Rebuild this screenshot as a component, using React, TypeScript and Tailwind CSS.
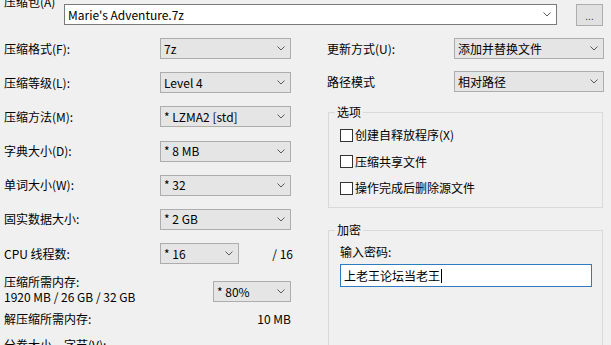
import React from "react";

function Chevron({ className = "" }: { className?: string }) {
  return (
    <svg width="8" height="5" viewBox="0 0 8 5" className={className}>
      <path d="M0.5 0.5 L4 4 L7.5 0.5" fill="none" stroke="#5a5a5a" strokeWidth="1" />
    </svg>
  );
}

function Combo({ value, className = "" }: { value: string; className?: string }) {
  return (
    <div
      className={`flex items-center justify-between h-[21px] bg-[#e5e5e5] border border-[#adadad] pl-[3px] pr-[5px] ${className}`}
    >
      <span className="whitespace-nowrap leading-[14px]">{value}</span>
      <Chevron />
    </div>
  );
}

function Row({ label, children }: { label: string; children: React.ReactNode }) {
  return (
    <div className="flex items-center h-[21px]">
      <span className="w-[156px] whitespace-nowrap leading-[14px]">{label}</span>
      {children}
    </div>
  );
}

function Check({ label }: { label: string }) {
  return (
    <div className="flex items-center h-[14px]">
      <span className="w-[13px] h-[13px] bg-white border border-[#333333]" />
      <span className="ml-[2px] leading-[14px] whitespace-nowrap">{label}</span>
    </div>
  );
}

export default function App() {
  return (
    <div className="w-[611px] h-[345px] overflow-hidden bg-[#f0f0f0] text-[12px] text-black font-['Noto_Sans_CJK_SC','Noto_Sans_CJK_JP',sans-serif] leading-none">
      {/* top row */}
      <div className="flex items-start pt-[4px] pl-[4px]">
        <span className="w-[60px] -mt-[10px] leading-[15px] whitespace-nowrap">压缩包(A)</span>
        <div className="flex items-center justify-between w-[493px] h-[21px] bg-white border border-[#7a7a7a] pl-[3px] pr-[5px]">
          <span className="leading-[14px] whitespace-nowrap">Marie's Adventure.7z</span>
          <Chevron />
        </div>
        <div className="ml-[19px] w-[27px] h-[22px] bg-[#e1e1e1] border border-[#adadad] flex items-end justify-center pb-[4px] text-[10px] text-[#444] leading-none">
          ...
        </div>
      </div>

      <div className="flex mt-[12px]">
        {/* left column */}
        <div className="w-[291px] pl-[4px] flex flex-col">
          <div className="flex flex-col gap-[13.2px]">
            <Row label="压缩格式(F):">
              <Combo value="7z" className="w-[131px]" />
            </Row>
            <Row label="压缩等级(L):">
              <Combo value="Level 4" className="w-[131px]" />
            </Row>
            <Row label="压缩方法(M):">
              <Combo value="* LZMA2 [std]" className="w-[131px]" />
            </Row>
            <Row label="字典大小(D):">
              <Combo value="* 8 MB" className="w-[131px]" />
            </Row>
            <Row label="单词大小(W):">
              <Combo value="* 32" className="w-[131px]" />
            </Row>
            <Row label="固实数据大小:">
              <Combo value="* 2 GB" className="w-[131px]" />
            </Row>
            <Row label="CPU 线程数:">
              <Combo value="* 16" className="w-[79px]" />
              <span className="flex-1 text-right leading-[14px] -mr-[2px]">/ 16</span>
            </Row>
          </div>
          <div className="flex justify-between mt-[10px]">
            <div className="flex flex-col leading-[15px] whitespace-nowrap">
              <span>压缩所需内存:</span>
              <span>1920 MB / 26 GB / 32 GB</span>
            </div>
            <Combo value="* 80%" className="w-[78px] self-end mb-[2px]" />
          </div>
          <div className="flex justify-between mt-[8px] leading-[14px]">
            <span>解压缩所需内存:</span>
            <span>10 MB</span>
          </div>
          <div className="mt-[12px] leading-[14px] whitespace-nowrap">分卷大小，字节(V):</div>
        </div>

        {/* right column */}
        <div className="ml-[36px] w-[277px] flex flex-col">
          <div className="flex items-center h-[21px]">
            <span className="w-[127px] leading-[14px] whitespace-nowrap">更新方式(U):</span>
            <Combo value="添加并替换文件" className="w-[150px]" />
          </div>
          <div className="flex items-center h-[21px] mt-[12px]">
            <span className="w-[127px] leading-[14px] whitespace-nowrap">路径模式</span>
            <Combo value="相对路径" className="w-[150px]" />
          </div>

          <fieldset className="ml-[1px] w-[275px] mt-[13px] border border-[#d9d9d9] pb-[12px]">
            <legend className="ml-[6px] px-[2px] leading-[14px]">选项</legend>
            <div className="pl-[11px] pt-[9px] flex flex-col gap-[12.5px]">
              <Check label="创建自释放程序(X)" />
              <Check label="压缩共享文件" />
              <Check label="操作完成后删除源文件" />
            </div>
          </fieldset>

          <fieldset className="ml-[1px] w-[275px] mt-[15px] h-[140px] border border-[#d9d9d9]">
            <legend className="ml-[6px] px-[2px] leading-[14px]">加密</legend>
            <div className="pl-[11px] pt-[8px] flex flex-col">
              <span className="leading-[14px]">输入密码:</span>
              <div className="mt-[5px] w-[252px] h-[23px] bg-white border border-[#2f7bc2] flex items-center pl-[3px]">
                <span className="leading-[14px] whitespace-nowrap">上老王论坛当老王</span>
                <span className="ml-[1px] w-px h-[14px] bg-black" />
              </div>
            </div>
          </fieldset>
        </div>
      </div>
    </div>
  );
}
